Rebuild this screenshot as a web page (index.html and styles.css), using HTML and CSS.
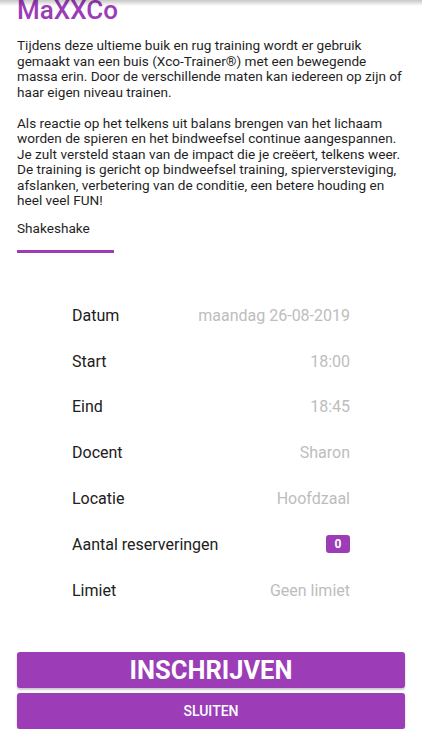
FILE: index.html
```html
<!DOCTYPE html>
<html lang="nl">
<head>
<meta charset="utf-8">
<title>MaXXCo</title>
<link rel="stylesheet" href="styles.css">
</head>
<body>
<div class="page">
  <h1 class="title">MaXXCo</h1>
  <p class="desc first">Tijdens deze ultieme buik en rug training wordt er gebruik gemaakt van een buis (Xco-Trainer®) met een bewegende massa erin. Door de verschillende maten kan iedereen op zijn of haar eigen niveau trainen.</p>
  <p class="desc">Als reactie op het telkens uit balans brengen van het lichaam worden de spieren en het bindweefsel continue aangespannen. Je zult versteld staan van de impact die je creëert, telkens weer. De training is gericht op bindweefsel training, spierversteviging, afslanken, verbetering van de conditie, een betere houding en heel veel FUN!</p>
  <p class="trainer">Shakeshake</p>
  <div class="divider"></div>

  <div class="details">
    <div class="row"><span class="label">Datum</span><span class="value">maandag 26-08-2019</span></div>
    <div class="row"><span class="label">Start</span><span class="value">18:00</span></div>
    <div class="row"><span class="label">Eind</span><span class="value">18:45</span></div>
    <div class="row"><span class="label">Docent</span><span class="value">Sharon</span></div>
    <div class="row"><span class="label">Locatie</span><span class="value">Hoofdzaal</span></div>
    <div class="row"><span class="label">Aantal reserveringen</span><span class="badge">0</span></div>
    <div class="row"><span class="label">Limiet</span><span class="value">Geen limiet</span></div>
  </div>

  <div class="actions">
    <button class="btn btn-big">INSCHRIJVEN</button>
    <button class="btn btn-small">SLUITEN</button>
  </div>
</div>
</body>
</html>
```
FILE: styles.css
```css
html, body {
  margin: 0;
  padding: 0;
  background: #ffffff;
  overflow: hidden;
}
body {
  font-family: Roboto, "Liberation Sans", sans-serif;
  color: #1f1f1f;
}
body::before {
  content: "";
  position: fixed;
  top: 0;
  left: 0;
  right: 0;
  height: 6px;
  background: linear-gradient(to bottom, rgba(0,0,0,0.22), rgba(0,0,0,0));
  pointer-events: none;
}
.page {
  padding: 0 17px;
}
.title {
  margin: -5px 0 0 0;
  font-size: 26px;
  font-weight: 500;
  color: #9c3cb6;
  line-height: 30px;
}
.desc {
  margin: 0 0 15.5px 0;
  font-size: 13.6px;
  line-height: 15.5px;
  color: #1f1f1f;
}
.desc.first {
  margin-top: 13px;
}
.trainer {
  margin: -3px 0 0 0;
  font-size: 13.6px;
  line-height: 15.5px;
}
.divider {
  margin-top: 13px;
  width: 97px;
  height: 3px;
  background: #9c3cb6;
}
.details {
  margin: 40px 55px 0 55px;
  display: flex;
  flex-direction: column;
}
.row {
  height: 45.8px;
  display: flex;
  align-items: center;
  justify-content: space-between;
  font-size: 16px;
}
.label {
  color: #202020;
}
.value {
  color: #bdbdbd;
}
.badge {
  background: #9c3cb6;
  color: #fff;
  font-size: 12px;
  font-weight: 700;
  width: 24px;
  height: 18px;
  line-height: 18px;
  text-align: center;
  border-radius: 3px;
}
.actions {
  margin-top: 39px;
  display: flex;
  flex-direction: column;
  gap: 5px;
}
.btn {
  display: block;
  width: 100%;
  height: 36px;
  border: none;
  border-radius: 3px;
  background: #9c3cb6;
  color: #fff;
  font-family: Roboto, "Liberation Sans", sans-serif;
  padding: 0;
  box-shadow: 0 2px 2px rgba(0,0,0,0.2), 0 0 1px rgba(0,0,0,0.12);
}
.btn-big {
  font-size: 25.5px;
  font-weight: 700;
}
.btn-small {
  font-size: 14px;
  font-weight: 500;
}
```
